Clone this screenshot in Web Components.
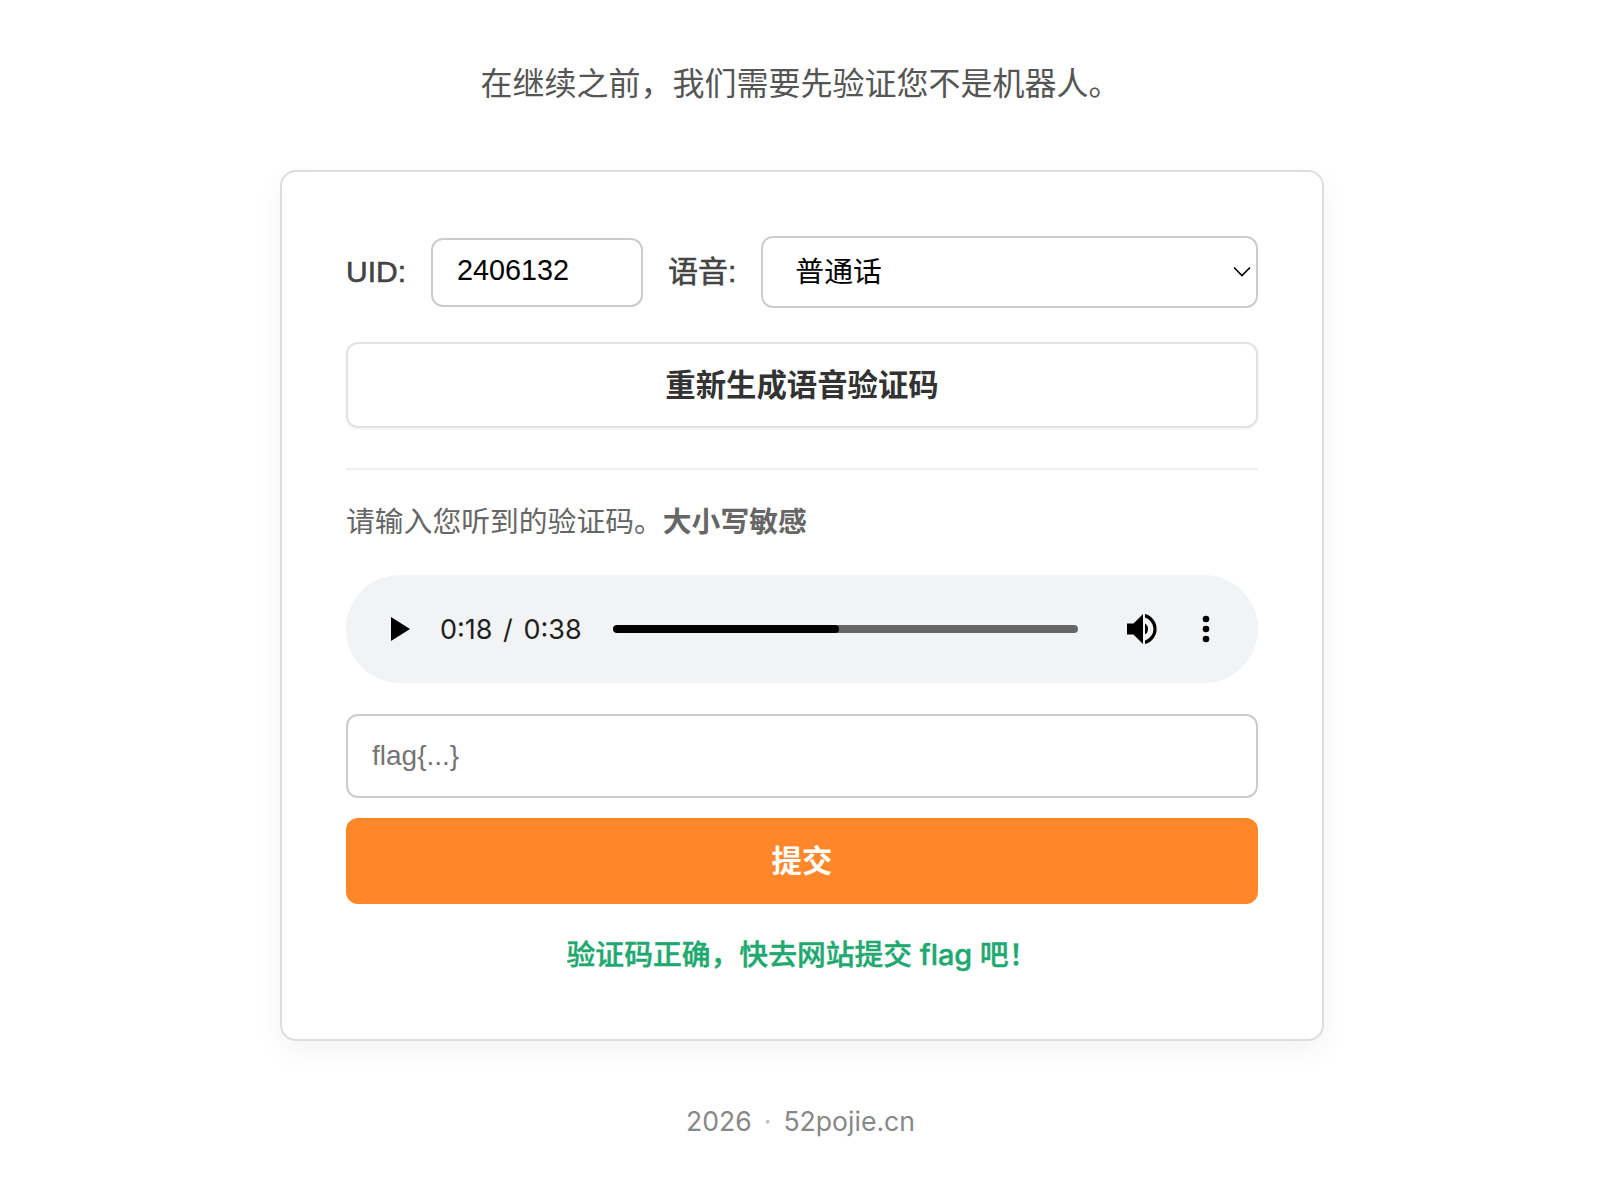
<!DOCTYPE html>
<html lang="zh-CN"><head><meta charset="utf-8"><title>验证</title>
<style>
html,body{margin:0;background:#fff}
body{font-family:"Liberation Sans","Noto Sans CJK SC",sans-serif}
i{font-style:normal;color:#bbb;margin:0 12px}
</style></head>
<body>
<captcha-page>
  <span slot="title">在继续之前&#xFF0C;我们需要先验证您不是机器人。</span>
  <captcha-card>
    <uid-row uid="2406132" lang-label="普通话"></uid-row>
    <regen-button>重新生成语音验证码</regen-button>
    <hint-text>请输入您听到的验证码。<b>大小写敏感</b></hint-text>
    <audio-bar current="0:18" total="0:38" progress="48.7"></audio-bar>
    <flag-form placeholder="flag{...}" submit="提交"></flag-form>
    <status-line>验证码正确&#xFF0C;快去网站提交 flag 吧&#xFF01;</status-line>
  </captcha-card>
  <span slot="footer">2026<i>·</i>52pojie.cn</span>
</captcha-page>
<script>
function def(name, css, html, init){
  customElements.define(name, class extends HTMLElement{
    constructor(){super();const r=this.attachShadow({mode:'open'});
      r.innerHTML='<style>'+css+'</style>'+html;}
    connectedCallback(){ if(init) init.call(this,this.shadowRoot); }
  });
}
def('captcha-page',`
  :host{display:flex;flex-direction:column;align-items:center;width:1604px;padding-top:60px;box-sizing:border-box;min-height:1202px}
  .t{font-size:32px;line-height:48px;color:#555;margin-bottom:62px;padding-right:3px}
  .f{font:26.6px/40px Inter,"Noto Sans CJK SC",sans-serif;color:#888;margin-top:60px;padding-right:3px}
  ::slotted(span){white-space:pre}
`,`<div class="t"><slot name="title"></slot></div><slot></slot><div class="f"><slot name="footer"></slot></div>`);
def('captcha-card',`
  :host{display:block;box-sizing:border-box;width:1044px;border:2px solid #ddd;border-radius:16px;padding:64px 64px 65px;background:#fff;box-shadow:0 10px 30px rgba(0,0,0,.05)}
`,`<slot></slot>`);
def('uid-row',`
  :host{display:flex;align-items:center;gap:25px;margin-bottom:34px;color:#444;font-size:30px;line-height:40px}
  label{-webkit-text-stroke:.6px #444}
  input{box-sizing:border-box;width:212px;height:69px;border:2px solid #ccc;border-radius:12px;padding:0 24px 3px;font:28.8px "Liberation Sans",sans-serif;color:#000;outline:0}
  .sel{flex:1;position:relative;display:flex}
  select{appearance:none;-webkit-appearance:none;flex:1;box-sizing:border-box;height:72px;border:2px solid #ccc;border-radius:12px;padding:0 32px;background:#fff;font:28.8px "Liberation Sans","Noto Sans CJK SC",sans-serif;color:#000;outline:0}
  svg{position:absolute;right:7px;top:30px;pointer-events:none}
`,`<label>UID:</label><input id="u"><label>语音:</label><div class="sel"><select id="s"></select><svg width="18" height="11" viewBox="0 0 18 11"><path d="M1 1.5l8 8 8-8" fill="none" stroke="#000" stroke-width="1.6"/></svg></div>`,
function(r){ r.getElementById('u').value=this.getAttribute('uid');
  const o=document.createElement('option');o.textContent=this.getAttribute('lang-label');r.getElementById('s').append(o);});
def('regen-button',`
  :host{display:flex;align-items:center;justify-content:center;box-sizing:border-box;height:86px;border:2px solid #e2e2e2;border-radius:12px;background:#fff;font-size:30.4px;font-weight:700;color:#333;box-shadow:0 1px 3px rgba(0,0,0,.06);margin-bottom:40px;padding-bottom:4px}
`,`<slot></slot>`);
def('hint-text',`
  :host{display:block;border-top:2px solid #eee;padding-top:30px;font-size:28.8px;line-height:44px;color:#666;margin-bottom:31px}
`,`<slot></slot>`);
def('audio-bar',`
  :host{display:flex;align-items:center;height:108px;border-radius:54px;background:#f1f3f4;margin-bottom:31px;position:relative}
  .play{margin-left:45px;width:19px;height:24px;flex:none}
  .time{margin-left:30px;width:142px;flex:none;font:27px/1 Inter,sans-serif;word-spacing:3px;color:#1f1f1f;white-space:pre}
  .track{margin-left:31px;width:465px;height:8px;border-radius:4px;background:#666;flex:none;overflow:hidden}
  .track div{height:100%;background:#000;border-radius:4px}
  .vol{margin-left:48px;width:32px;height:32px;flex:none}
  .dots{margin-left:44px;width:8px;height:28px;flex:none}
`,`<svg class="play" viewBox="0 0 19 24"><path d="M0 0l19 12L0 24z"/></svg><span class="time" id="t"></span><div class="track"><div id="p"></div></div>
<svg class="vol" viewBox="0 0 32 32"><path d="M1 10.5h6.5L17 1v30l-9.500-9.500H1z"/><path d="M19 10.500a6.500 6.500 0 0 1 0 11z"/><path d="M19 1a15.500 15.500 0 0 1 0 30v-3.600a11.900 11.900 0 0 0 0-22.800z"/></svg>
<svg class="dots" viewBox="0 0 8 28"><circle cx="4" cy="4" r="3.300"/><circle cx="4" cy="14" r="3.300"/><circle cx="4" cy="24" r="3.300"/></svg>`,
function(r){ r.getElementById('t').textContent=this.getAttribute('current')+' / '+this.getAttribute('total');
  r.getElementById('p').style.width=this.getAttribute('progress')+'%';});
def('flag-form',`
  :host{display:flex;flex-direction:column;gap:20px}
  input{box-sizing:border-box;width:100%;height:84px;border:2px solid #ccc;border-radius:12px;padding:0 24px;font:28px "Liberation Sans",sans-serif;outline:0}
  input::placeholder{color:#757575;opacity:1}
  button{height:86px;border:0;border-radius:12px;background:#ff8729;color:#fff;font:700 30.4px "Liberation Sans","Noto Sans CJK SC",sans-serif;padding:0 0 4px}
`,`<input id="i"><button id="b"></button>`,
function(r){ r.getElementById('i').placeholder=this.getAttribute('placeholder'); r.getElementById('b').textContent=this.getAttribute('submit');});
def('status-line',`
  :host{display:block;margin-top:32px;text-align:center;font:500 28.8px/38px Inter,"Noto Sans CJK SC",sans-serif;color:#1fa971;-webkit-text-stroke:.45px #1fa971}
`,`<slot></slot>`);
</script>
</body></html>
